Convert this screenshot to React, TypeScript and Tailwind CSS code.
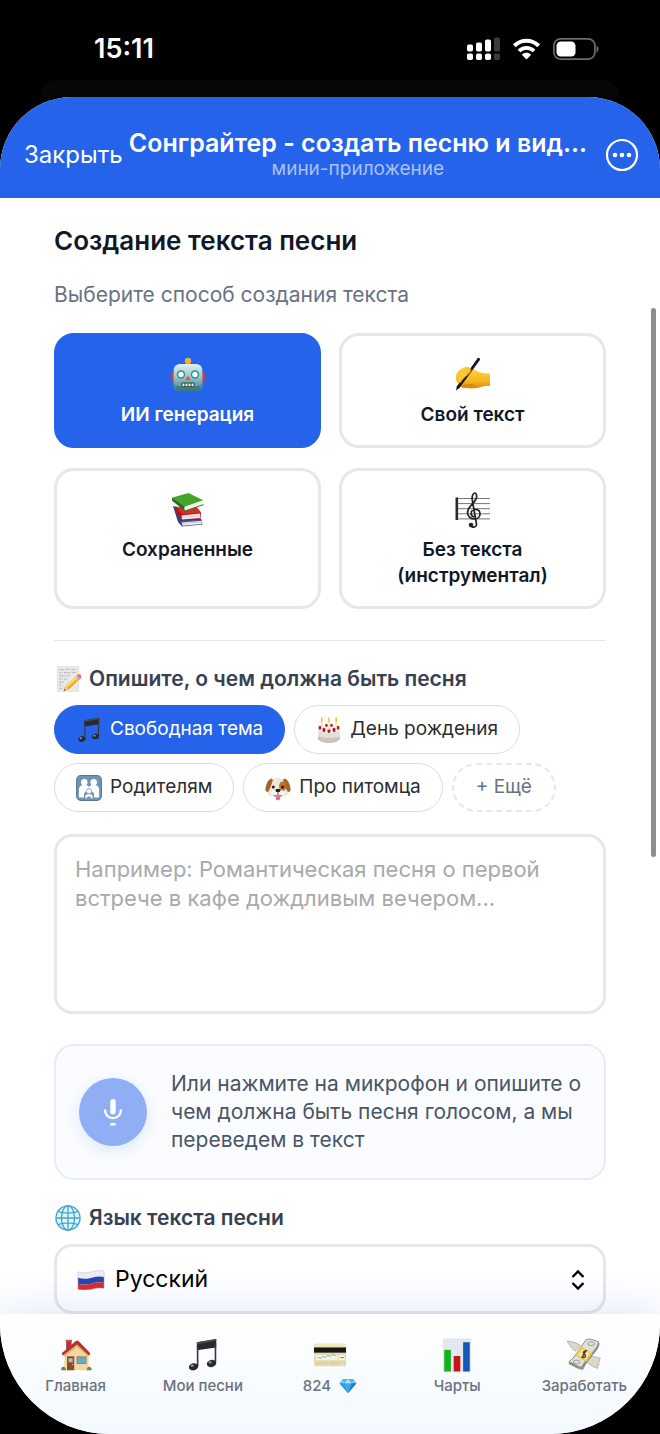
import { useState } from "react";
import type { ReactNode } from "react";

type IconProps = { className?: string };

function Robot({ className }: IconProps) {
  return (
    <svg viewBox="0 0 36 36" className={className} aria-hidden="true">
      <defs>
        <linearGradient id="robotFace" x1="0" y1="0" x2="0" y2="1">
          <stop offset="0" stopColor="#dff0f1" />
          <stop offset="0.45" stopColor="#9fc6cb" />
          <stop offset="1" stopColor="#3f8287" />
        </linearGradient>
      </defs>
      <rect x="1" y="15" width="5" height="10" rx="2" fill="#b8474d" />
      <rect x="30" y="15" width="5" height="10" rx="2" fill="#b8474d" />
      <path d="M15 5.500h6l1 3h-8z" fill="#a8383b" />
      <circle cx="18" cy="4" r="3.200" fill="#f5b031" />
      <rect x="3.600" y="7" width="28.800" height="27.500" rx="6" fill="url(#robotFace)" />
      <path d="M4 27c1 5 3.500 7.500 7.500 7.500h13c4 0 6.500-2.500 7.500-7.500-3 4-25 4-28 0z" fill="#2f6f78" opacity="0.6" />
      <circle cx="11" cy="17.500" r="4.200" fill="#25939e" />
      <circle cx="25" cy="17.500" r="4.200" fill="#25939e" />
      <circle cx="11" cy="17.500" r="2.700" fill="#f2fcff" />
      <circle cx="25" cy="17.500" r="2.700" fill="#f2fcff" />
      <path d="M18 18.500l3 4.800h-6z" fill="#dd5a46" />
      <rect x="11.500" y="25.500" width="13" height="4.600" rx="1" fill="#243d43" />
      <path d="M12.500 26.500h2v2.800h-2zM15.500 26.500h2v2.800h-2zM18.500 26.500h2v2.800h-2zM21.500 26.500h2v2.800h-2z" fill="#f4f4ec" />
    </svg>
  );
}

function WritingHand({ className }: IconProps) {
  return (
    <svg viewBox="0 0 36 36" className={className} aria-hidden="true">
      <defs>
        <linearGradient id="handSkin" x1="0" y1="0" x2="0" y2="1">
          <stop offset="0" stopColor="#ffd34c" />
          <stop offset="0.65" stopColor="#f9b820" />
          <stop offset="1" stopColor="#d18a0c" />
        </linearGradient>
      </defs>
      <path
        d="M1 20c0-4 3-7.500 7.500-9.500 2.500-1 5.500-1 6.500.5 2 .2 4 1 6 2.500 3.500 2 6.500 3 14 3v12.500c-4-.5-7 .5-10.500 1.500-5 1.200-10 1-14.500.5-3.500 0-6-1.500-5-3.800C1.500 25.500.8 23 1 20z"
        fill="url(#handSkin)"
      />
      <path d="M8 28.500c3-1 5-.5 6 1M14 28c2-.8 4-.3 5 1" fill="none" stroke="#b87209" strokeWidth="0.800" />
      <path d="M22.500 1.200c1-1 3 .2 2.400 1.700L15 16.500 4.500 31 1 33.500l.8-4.200 11-14z" fill="#15181b" />
      <path d="M4 17c2-4 7-7 10-6.500 2.500.5 2.500 3 .5 5.500-2.500 3-6 5-9.500 10-1.500-2-2-6-1-9z" fill="#fdc633" />
      <path d="M5.500 26c2-4.500 5.500-7 9-10 2-2 2-4 .5-5" fill="none" stroke="#c27e0c" strokeWidth="0.900" />
    </svg>
  );
}

function Books({ className }: IconProps) {
  return (
    <svg viewBox="0 0 36 36" className={className} aria-hidden="true">
      <path d="M3 14l5 1 23 12 1.500 5.500L12 34.500 8 30z" fill="#323f8b" />
      <path d="M11.500 29.800L32 28l-.5 4-19 1.800z" fill="#eef0f4" />
      <path d="M10.500 29l21.500-1.600v1.300l-20 1.700z" fill="#4454a8" />
      <path d="M12 31.500l19.500-1.600" stroke="#a9adc0" strokeWidth="0.500" />
      <path d="M5.500 15.500L28 17l3 3.800-.6 6.200-19.500 1L6 20z" fill="#b2161c" />
      <path d="M11.500 23.500l18.500-2v4.500l-18 1.500z" fill="#f0ece8" />
      <path d="M6.500 15l6 7.500L31 20.600l-5-6.600z" fill="#d92c2a" />
      <path d="M12 25.500l18-1.700" stroke="#bdaead" strokeWidth="0.500" />
      <path d="M2.500 5.500L18.500 1l15 7.500L15 15.500z" fill="#43a52a" />
      <path d="M2.500 5.500c-1 1.500-.8 3 .5 4l12 9.500v-4z" fill="#22701b" />
      <path d="M15 14.500l18-6.300c-1 1.500-1 3 0 4.300L15.500 18.600c-1.500-1-1.500-3-.5-4.100z" fill="#f3f3ee" />
      <path d="M15.500 18.900l18-6.300" stroke="#2d801f" strokeWidth="1" />
    </svg>
  );
}

function Score({ className }: IconProps) {
  return (
    <svg viewBox="0 0 36 36" className={className} aria-hidden="true">
      <path d="M3 6.500h32M3 11.600h32M3 16.700h32M3 21.800h32M3 26.900h32" stroke="#777" strokeWidth="1" />
      <rect x="0.500" y="5.500" width="2.600" height="22.500" fill="#2a2a2c" />
      <path
        d="M21.500 31.500c.5 3-2.500 4.200-4.500 3.400M21.500 32L17.200 7.500c-.5-3.500 1.200-6.500 2.700-6.500s2 3 1.500 5c-1 5-8.900 8-8.900 14.500 0 4 3.300 6.500 7 6.500 3.500 0 5.500-2.300 5.500-5 0-2.800-2-4.500-4.500-4.500-2.700 0-4.300 1.800-4.300 4 0 1.500 1 2.800 2.300 3.300"
        fill="none"
        stroke="#232325"
        strokeWidth="1.700"
        strokeLinecap="round"
      />
      <circle cx="16" cy="33" r="2.300" fill="#232325" />
    </svg>
  );
}

function Memo({ className }: IconProps) {
  return (
    <svg viewBox="0 0 36 36" className={className} aria-hidden="true">
      <rect x="4" y="2" width="28" height="32" fill="#e9e9e7" stroke="#d3d3d1" strokeWidth="0.600" />
      <path
        d="M7 6h6M15 5.500h5M22 6h6M7 10h4M13 10h8M23 9.500h5M7 14h7M16 14h4M7 18h4M13 18h4M7 22h6M7 26h3M7 30h4"
        stroke="#a5a7ab"
        strokeWidth="1.200"
        strokeDasharray="2.200 0.700"
      />
      <path d="M30 13l4 4.500L19 31.500l-6.500 1.500 2-6z" fill="#f0aa25" />
      <path d="M30 13l2.200 2.400L16.500 29.300l-2-2.300z" fill="#ffdb63" />
      <path d="M14.500 27l4.500 4.500-6.500 1.500z" fill="#e9c79b" />
      <path d="M13.200 30.800l2 1.600-2.700.6z" fill="#333" />
      <path d="M28 14.800l2.600-2.300 4.200 4.500-2.700 2.400z" fill="#b9bdc4" />
      <path d="M29.500 13.500l1.500-1.500c2-1.300 5.500 2 4 4.300L33.500 18z" fill="#e6777b" />
    </svg>
  );
}

function Notes({ className }: IconProps) {
  return (
    <svg viewBox="0 0 36 36" className={className} aria-hidden="true">
      <path d="M11.500 4.500L32 1v9L11.500 13z" fill="#26292d" />
      <path d="M11.500 4.500L32 1v2L11.500 6.500z" fill="#484d53" />
      <path d="M12.300 8v22M31.200 5v21" stroke="#34383d" strokeWidth="1.700" />
      <ellipse cx="8" cy="30.500" rx="5" ry="3.800" fill="#26292d" transform="rotate(-12 8 30.500)" />
      <ellipse cx="27" cy="27" rx="5" ry="3.800" fill="#26292d" transform="rotate(-12 27 27)" />
      <ellipse cx="6.600" cy="29.300" rx="1.800" ry="1.200" fill="#8b959c" />
      <ellipse cx="25.600" cy="25.800" rx="1.800" ry="1.200" fill="#8b959c" />
    </svg>
  );
}

function Cake({ className }: IconProps) {
  return (
    <svg viewBox="0 0 36 36" className={className} aria-hidden="true">
      <path d="M3 16v13c1 4 8 6 15 6s14-2 15-6V16z" fill="#e3dfdb" />
      <path d="M3 26c3 4 27 4 30 0v3c-1 4-8 6-15 6S4 33 3 29z" fill="#cdc7c1" />
      <ellipse cx="18" cy="16" rx="15" ry="6" fill="#f7f4f0" />
      <g fill="#b01e35">
        <ellipse cx="5.500" cy="15" rx="2" ry="2.800" />
        <ellipse cx="11" cy="18" rx="2.200" ry="3" />
        <ellipse cx="18" cy="19" rx="2.200" ry="3" />
        <ellipse cx="25" cy="18" rx="2.200" ry="3" />
        <ellipse cx="30.500" cy="15" rx="2" ry="2.800" />
        <ellipse cx="14.500" cy="11.500" rx="1.800" ry="2.200" />
        <ellipse cx="21.500" cy="11.500" rx="1.800" ry="2.200" />
      </g>
      <path d="M8 6v10M18 6v12M28 6v10" stroke="#f2e3a0" strokeWidth="2" />
      <path d="M8 1.500v4.500M18 1.500v4.500M28 1.500v4.500" stroke="#f4b52d" strokeWidth="2" strokeLinecap="round" />
      <path d="M3 29c1 4 8 6 15 6s14-2 15-6" fill="none" stroke="#a8a19a" strokeWidth="1" />
    </svg>
  );
}

function Family({ className }: IconProps) {
  return (
    <svg viewBox="0 0 36 36" className={className} aria-hidden="true">
      <rect x="0.800" y="0.800" width="34.400" height="34.400" rx="6" fill="#6f93b3" stroke="#587894" strokeWidth="1.400" />
      <g fill="#fff">
        <circle cx="11.500" cy="10" r="4.500" />
        <circle cx="24.500" cy="10" r="4.500" />
        <path d="M4 20c0-4 3-6 7.500-6 3 0 5 .8 6.500 2.500 1.500-1.700 3.500-2.500 6.500-2.500 4.500 0 7.500 2 7.500 6v11h-7v-4c0-3-3-4.500-7-4.500s-7 1.500-7 4.500v4H4z" />
      </g>
      <circle cx="18" cy="22.500" r="3.700" fill="#fff" stroke="#6f93b3" />
      <path d="M12.500 33v-3.500c0-2 2-3.500 5.500-3.500s5.500 1.500 5.500 3.500V33h-3.300v-2.500h-4.400V33z" fill="#fff" stroke="#6f93b3" />
    </svg>
  );
}

function Dog({ className }: IconProps) {
  return (
    <svg viewBox="0 0 36 36" className={className} aria-hidden="true">
      <path d="M7 8C11 3.500 25 3.500 29 8c2 4 2.500 10 4 14 1 5-5 8-10 8H13c-5 0-11-3-10-8 1.500-4 2-10 4-14z" fill="#ece7e0" />
      <path d="M9 5C4 6 1 14 .5 20c0 3 3 4.500 4.500 2.500C8 18 9 12 11 7z" fill="#a4652b" />
      <path d="M27 5c5 1 8 9 8.500 15 0 3-3 4.500-4.500 2.500C28 18 27 12 25 7z" fill="#a4652b" />
      <ellipse cx="24.500" cy="15.500" rx="5" ry="6.500" fill="#b97431" />
      <circle cx="11.500" cy="16.500" r="2.100" fill="#2a1c17" />
      <circle cx="24.500" cy="16.500" r="2.100" fill="#2a1c17" />
      <path d="M15 29h6v3.500c0 3.300-6 3.300-6 0z" fill="#f0648b" />
      <ellipse cx="14" cy="25.500" rx="5" ry="4.300" fill="#faf7f3" />
      <ellipse cx="22" cy="25.500" rx="5" ry="4.300" fill="#faf7f3" />
      <ellipse cx="18" cy="21.500" rx="3.600" ry="2.500" fill="#251c1a" />
      <path d="M18 23v4c-1 2.300-4.500 2.600-6 1M18 27c1 2.300 4.500 2.600 6 1" fill="none" stroke="#3a2c26" strokeWidth="1.100" />
    </svg>
  );
}

function Globe({ className }: IconProps) {
  return (
    <svg viewBox="0 0 36 36" className={className} aria-hidden="true">
      <circle cx="18" cy="18" r="15.500" fill="#e3f5fb" />
      <g fill="none" stroke="#3fa6ca" strokeWidth="1.700">
        <circle cx="18" cy="18" r="15.500" />
        <ellipse cx="18" cy="18" rx="8.500" ry="15.500" />
        <path d="M18 2.500v31M2.500 18h31M5 9.500c7 3 19 3 26 0M5 26.500c7-3 19-3 26 0" />
      </g>
    </svg>
  );
}

function Flag({ className }: IconProps) {
  return (
    <svg viewBox="0 0 36 26" className={className} aria-hidden="true">
      <path d="M1 2.500c8 2 14 1 19-.5 5-1.300 10-2 15-.5v7.700c-5-1.500-10-.8-15 .5-5 1.500-11 2.500-19 .5z" fill="#eceef2" />
      <path d="M1 10.200c8 2 14 1 19-.5 5-1.300 10-2 15-.5v7.600c-5-1.500-10-.8-15 .5-5 1.500-11 2.500-19 .5z" fill="#2347b5" />
      <path d="M1 17.800c8 2 14 1 19-.5 5-1.300 10-2 15-.5V24c-5-1-10-.5-15 .8-5 1.300-11 1.700-19 .4z" fill="#d92c2f" />
      <path d="M1 2.500c8 2 14 1 19-.5 5-1.300 10-2 15-.5V24c-5-1-10-.5-15 .8-5 1.300-11 1.700-19 .4z" fill="none" stroke="#b6bac4" strokeWidth="0.600" />
    </svg>
  );
}

function House({ className }: IconProps) {
  return (
    <svg viewBox="-1 0 38 36" className={className} aria-hidden="true">
      <path d="M7 2h6v10H7z" fill="#a83a35" />
      <path d="M6.500 1h7v2.200h-7z" fill="#c9564b" />
      <path d="M5 17L19 5l13 12v18H5z" fill="#f3d7a0" />
      <path d="M5 17L19 5l13 12v3.500L19 9 5 20.500z" fill="#cfa168" opacity="0.600" />
      <path d="M18 2L2 16l1.200 2.800L19 6.300l13.800 12.500L34 16 20.500 2z" fill="#b7332e" />
      <rect x="8" y="19.500" width="8" height="15.500" fill="#8c4a30" />
      <path d="M9.700 21.500h4.600v4.500H9.700z" fill="#9dc4d3" />
      <circle cx="14.500" cy="28.500" r="0.700" fill="#f4d07a" />
      <rect x="18.700" y="19.500" width="11" height="8.600" fill="#a8774b" />
      <path d="M19.700 20.500h4.200v6.600h-4.200zM24.600 20.500h4.200v6.600h-4.200z" fill="#63add6" />
      <path d="M1.500 35c-1-5 5-5.500 5.500 0zM30 35c0-5.500 6-5 5.500 0z" fill="#5d9440" />
    </svg>
  );
}

function Card({ className }: IconProps) {
  return (
    <svg viewBox="0 0 36 36" className={className} aria-hidden="true">
      <rect x="1" y="6" width="34" height="24" rx="1.800" fill="#e3dab0" />
      <path d="M1 8c0-1.300.6-2 2-2h30c1.400 0 2 .7 2 2v2.500H1z" fill="#f0e8bd" />
      <rect x="1" y="10" width="34" height="5.500" fill="#171714" />
      <rect x="3" y="18" width="23" height="5.500" fill="#f5f4ec" />
      <path d="M4.500 21.500c2-3 3 2 5-1s3 2 5-1 3 2 5-1 2 1 4.500 0" fill="none" stroke="#7690a5" strokeWidth="0.900" />
      <rect x="27.500" y="18" width="6" height="5.500" fill="#f5f4ec" />
      <path d="M29 20.700h3.500" stroke="#c05b48" strokeWidth="1.200" />
      <path d="M3 26.500h12M18 26.500h10" stroke="#d0c592" strokeWidth="1" />
    </svg>
  );
}

function Chart({ className }: IconProps) {
  return (
    <svg viewBox="0 0 36 36" className={className} aria-hidden="true">
      <rect x="3" y="0.500" width="30" height="35" fill="#e2e7ef" />
      <path d="M3 6h30M3 12h30M3 18h30M3 24h30M3 30h30M9 .5v35M15 .5v35M21 .5v35M27 .5v35" stroke="#eef1f5" strokeWidth="0.500" />
      <rect x="4.500" y="12.500" width="7" height="23" fill="#13b21d" />
      <rect x="14.500" y="19" width="7" height="16.500" fill="#c5161c" />
      <rect x="24.500" y="4.500" width="7" height="31" fill="#1558b5" />
    </svg>
  );
}

function Money({ className }: IconProps) {
  return (
    <svg viewBox="0 0 36 36" className={className} aria-hidden="true">
      <path d="M14 7.500C9 4.500 5 4 .5 3c.3 2.500 1.500 4 3 4.700-.5 1.500 1 3 2.500 3.200 0 1.600 1.500 2.600 3.500 2.600z" fill="#dcd7cc" stroke="#aba599" strokeWidth="0.800" />
      <path d="M23 21c3-2 7-1.500 12.500.5-1.500 1-1.800 2-.7 3.600-1.800.3-2 1.500-.8 3.400-2 0-2 1.300-1.200 3.500-4-.5-9-3.500-12-7z" fill="#dcd7cc" stroke="#aba599" strokeWidth="0.800" />
      <path d="M20 3c5-3.500 9 1 14.500 2.500C34 14 24 19 17 33.500 12 34 7 29.500 1.500 27.500z" fill="#8f938b" />
      <path d="M20 2c5-2.500 9 1 13.500 2C33 12 22 18 15.500 31 11 31 7 26.500 2 25.500 10 19 14 10 20 2z" fill="#dfe1d7" stroke="#7c8078" strokeWidth="0.900" />
      <ellipse cx="25.500" cy="6" rx="3.500" ry="2" fill="none" stroke="#969b91" />
      <ellipse cx="10" cy="25.500" rx="3.500" ry="2" fill="none" stroke="#969b91" />
      <path d="M14 9l13 7-6.500 9.500L8.500 18z" fill="#edc15a" />
      <path d="M16 11.500l8.500 4.500-5 7.200-8-5z" fill="#f7e2a0" />
      <path d="M20.500 14c-2-.8-4 1-2.800 2.500 1 1.300 2.300 1.300 1.800 2.800-.5 1.600-2.500 1.600-4 .6M20.800 12.500l-5.200 8.500" fill="none" stroke="#584516" strokeWidth="1.500" />
    </svg>
  );
}

function Gem({ className }: IconProps) {
  return (
    <svg viewBox="0 0 36 30" className={className} aria-hidden="true">
      <path d="M7.500 1h21L35 9.500 18 29.500 1 9.500z" fill="#43a6ec" />
      <path d="M7.500 1L1 9.500h9.500zM28.500 1L35 9.500h-9.500z" fill="#80cdf8" />
      <path d="M7.500 1h10.500l-7.500 8.500zM28.500 1H18l7.500 8.500z" fill="#5ab6f0" />
      <path d="M18 1l7.500 8.500h-15z" fill="#b1e2fb" />
      <path d="M1 9.500h9.500L18 29.500z" fill="#319ae7" />
      <path d="M35 9.500h-9.500L18 29.500z" fill="#1d7ed3" />
    </svg>
  );
}

function Signal({ className }: IconProps) {
  return (
    <svg viewBox="0 0 33 24" className={className} aria-hidden="true">
      <g fill="#fff">
        <rect x="0" y="7.500" width="6" height="7" rx="1.800" />
        <rect x="9" y="5.500" width="6" height="9" rx="1.800" />
        <rect x="18" y="2.500" width="6" height="12" rx="1.800" />
        <rect x="0" y="16.500" width="6" height="6.500" rx="1.800" />
        <rect x="9" y="16.500" width="6" height="6.500" rx="1.800" />
        <rect x="18" y="16.500" width="6" height="6.500" rx="1.800" />
      </g>
      <g fill="#3b3b3d">
        <rect x="27" y="0.500" width="6" height="14" rx="1.800" />
        <rect x="27" y="16.500" width="6" height="6.500" rx="1.800" />
      </g>
    </svg>
  );
}

function Wifi({ className }: IconProps) {
  return (
    <svg viewBox="0 0 29 22" className={className} aria-hidden="true">
      <path d="M2.300 7.800c7-6.700 17.400-6.700 24.400 0" fill="none" stroke="#fff" strokeWidth="4" />
      <path d="M7 13c4.400-4.200 10.600-4.200 15 0" fill="none" stroke="#fff" strokeWidth="3.800" />
      <path d="M14.500 21.500L9.800 16.700c2.700-2.600 6.700-2.600 9.400 0z" fill="#fff" />
    </svg>
  );
}

function Battery({ className }: IconProps) {
  return (
    <svg viewBox="0 0 46 22" className={className} aria-hidden="true">
      <rect x="0.900" y="0.900" width="41" height="20.200" rx="6.500" fill="none" stroke="#6b6b6d" strokeWidth="1.700" />
      <path d="M43.500 7.500c2.500.8 2.500 6.200 0 7z" fill="#6b6b6d" />
      <rect x="3.500" y="3.500" width="19" height="15" rx="4.300" fill="#fff" />
    </svg>
  );
}

function Mic({ className }: IconProps) {
  return (
    <svg viewBox="0 0 20 28" className={className} aria-hidden="true">
      <rect x="7.300" y="1" width="5.400" height="15.500" rx="2.700" fill="#fff" />
      <path d="M2 11.500c0 11.500 16 11.500 16 0" fill="none" stroke="#fff" strokeWidth="2.300" />
      <rect x="7.300" y="25" width="5.400" height="2.500" fill="#fff" />
    </svg>
  );
}

type Mode = { id: string; label: ReactNode; icon: (p: IconProps) => ReactNode };

const modes: Mode[] = [
  { id: "ai", label: "ИИ генерация", icon: Robot },
  { id: "own", label: "Свой текст", icon: WritingHand },
  { id: "saved", label: "Сохраненные", icon: Books },
  {
    id: "instrumental",
    label: (
      <>
        Без текста
        <br />
        (инструментал)
      </>
    ),
    icon: Score,
  },
];

const topics = [
  { label: "Свободная тема", icon: Notes },
  { label: "День рождения", icon: Cake },
  { label: "Родителям", icon: Family },
  { label: "Про питомца", icon: Dog },
];

const tabs = [
  { label: "Главная", icon: House },
  { label: "Мои песни", icon: Notes },
  { label: "824", icon: Card, gem: true },
  { label: "Чарты", icon: Chart },
  { label: "Заработать", icon: Money },
];

function StatusBar() {
  return (
    <div className="flex h-20 shrink-0 items-center justify-between pl-[94px] pr-[61px] pt-[17px] text-white">
      <span className="text-[27px] leading-8 font-semibold">15:11</span>
      <div className="flex items-center gap-3">
        <Signal className="h-6 w-[33px]" />
        <Wifi className="h-[22px] w-[29px]" />
        <Battery className="h-[22px] w-[46px]" />
      </div>
    </div>
  );
}

function Header() {
  return (
    <header className="flex h-[101px] shrink-0 items-center bg-[#2563eb] pl-6 pr-[21px] pt-[14px] text-white">
      <button className="shrink-0 text-2xl">Закрыть</button>
      <div className="min-w-0 flex-1 pr-3 text-center">
        <div className="truncate text-[25px] leading-7 font-semibold">Сонграйтер - создать песню и вид...</div>
        <div className="text-[19px] leading-6 text-[#a9c2f7]">мини-приложение</div>
      </div>
      <button aria-label="Меню" className="shrink-0">
        <svg viewBox="0 0 34 34" className="size-[34px]">
          <circle cx="17" cy="17" r="15" fill="none" stroke="#fff" strokeWidth="2.200" />
          <circle cx="10" cy="17" r="2.300" fill="#fff" />
          <circle cx="17" cy="17" r="2.300" fill="#fff" />
          <circle cx="24" cy="17" r="2.300" fill="#fff" />
        </svg>
      </button>
    </header>
  );
}

function TabBar() {
  return (
    <nav className="relative flex h-[120px] shrink-0 bg-linear-to-b from-white to-[#f3f9fe] px-3 pt-6 shadow-[0_-6px_36px_rgba(37,99,235,0.14)]">
      {tabs.map(({ label, icon: Icon, gem }) => (
        <a key={label} href="#" className="flex flex-1 flex-col items-center gap-0.5 text-[15px] leading-6 font-medium text-gray-500">
          <Icon className="size-[34px]" />
          <span className="flex items-center gap-2 whitespace-nowrap">
            {label}
            {gem && <Gem className="h-4 w-[18px]" />}
          </span>
        </a>
      ))}
    </nav>
  );
}

function App() {
  const [mode, setMode] = useState("ai");
  const [topic, setTopic] = useState("Свободная тема");
  const [text, setText] = useState("");

  return (
    <div className="flex h-screen flex-col bg-black font-['Inter','Liberation_Sans',sans-serif]">
      <StatusBar />
      <div className="mx-10 h-[17px] shrink-0 rounded-t-3xl bg-[#080506]" />
      <div className="relative flex min-h-0 flex-1 flex-col overflow-hidden rounded-t-[72px] rounded-b-[110px] bg-white">
        <Header />
        <main className="min-h-0 flex-1 overflow-y-auto px-[54px] pt-[25px] [scrollbar-width:none]">
          <h1 className="text-[26px] leading-9 font-semibold text-gray-900">Создание текста песни</h1>
          <p className="mt-[22px] text-[21px] leading-7 text-gray-500">Выберите способ создания текста</p>

          <div className="mt-6 grid grid-cols-2 gap-x-[18px] gap-y-5">
            {modes.map(({ id, label, icon: Icon }) => (
              <button
                key={id}
                onClick={() => setMode(id)}
                className={`flex flex-col items-center rounded-[20px] border-3 px-4 pt-[21px] pb-[17px] text-[19px] leading-[26px] font-semibold ${
                  mode === id ? "border-[#2563eb] bg-[#2563eb] text-white" : "border-[#e7e7ea] bg-white text-gray-900"
                }`}
              >
                <Icon className="mb-[9px] size-9" />
                <span>{label}</span>
              </button>
            ))}
          </div>

          <hr className="mt-[31px] border-gray-200" />

          <label htmlFor="about" className="mt-6 flex items-center gap-[7px] text-[21px] leading-7 font-semibold text-gray-700">
            <Memo className="size-7" />
            Опишите, о чем должна быть песня
          </label>

          <div className="mt-3 flex flex-wrap gap-[9px]">
            {topics.map(({ label, icon: Icon }) => (
              <button
                key={label}
                onClick={() => setTopic(label)}
                className={`flex h-[49px] items-center gap-2 rounded-full border px-[21px] text-[19px] ${
                  topic === label ? "border-[#2563eb] bg-[#2563eb] text-white" : "border-[#dcdcdf] bg-white text-[#2c2c2e]"
                }`}
              >
                <Icon className="size-[26px]" />
                {label}
              </button>
            ))}
            <button className="h-[49px] rounded-full border-2 border-dashed border-gray-200 px-[22px] text-[19px] text-gray-500">
              + Ещё
            </button>
          </div>

          <textarea
            id="about"
            value={text}
            onChange={(e) => setText(e.target.value)}
            placeholder="Например: Романтическая песня о первой встрече в кафе дождливым вечером..."
            className="mt-[22px] block h-[180px] w-full resize-none rounded-[18px] border-3 border-[#e7e7ea] px-[18px] py-[18px] text-[22px] leading-[29px] outline-none placeholder:text-[#a9a9ac]"
          />

          <div className="mt-[30px] flex items-center gap-6 rounded-[20px] border-2 border-[#e6edf8] bg-[#fafcff] pr-4 pl-[23px] py-6">
            <button
              aria-label="Записать голос"
              className="flex size-[68px] shrink-0 items-center justify-center rounded-full bg-[#8faef4] shadow-[0_4px_16px_rgba(37,99,235,0.14)]"
            >
              <Mic className="h-7 w-5" />
            </button>
            <p className="text-[21px] leading-7 text-gray-600">
              Или нажмите на микрофон и опишите о чем должна быть песня голосом, а мы переведем в текст
            </p>
          </div>

          <label htmlFor="lang" className="mt-6 flex items-center gap-[7px] text-[21px] leading-7 font-semibold text-gray-700">
            <Globe className="size-7" />
            Язык текста песни
          </label>
          <div className="relative mt-3">
            <select
              id="lang"
              className="h-[70px] w-full appearance-none rounded-[18px] border-3 border-[#e7e7ea] bg-white pl-[58px] text-[23px] text-black"
            >
              <option>Русский</option>
              <option>English</option>
            </select>
            <Flag className="pointer-events-none absolute top-[26px] left-[23px] h-5 w-7" />
            <svg viewBox="0 0 14 20" className="pointer-events-none absolute top-[26px] right-[21px] h-5 w-3.5" aria-hidden="true">
              <path d="M1.500 7L7 1.500 12.500 7M1.500 13L7 18.500 12.500 13" fill="none" stroke="#000" strokeWidth="2.400" />
            </svg>
          </div>
        </main>
        <TabBar />
        <div className="absolute top-[211px] right-1 h-[549px] w-[5px] rounded-full bg-[#8e8e90]" />
      </div>
    </div>
  );
}

export default App;
